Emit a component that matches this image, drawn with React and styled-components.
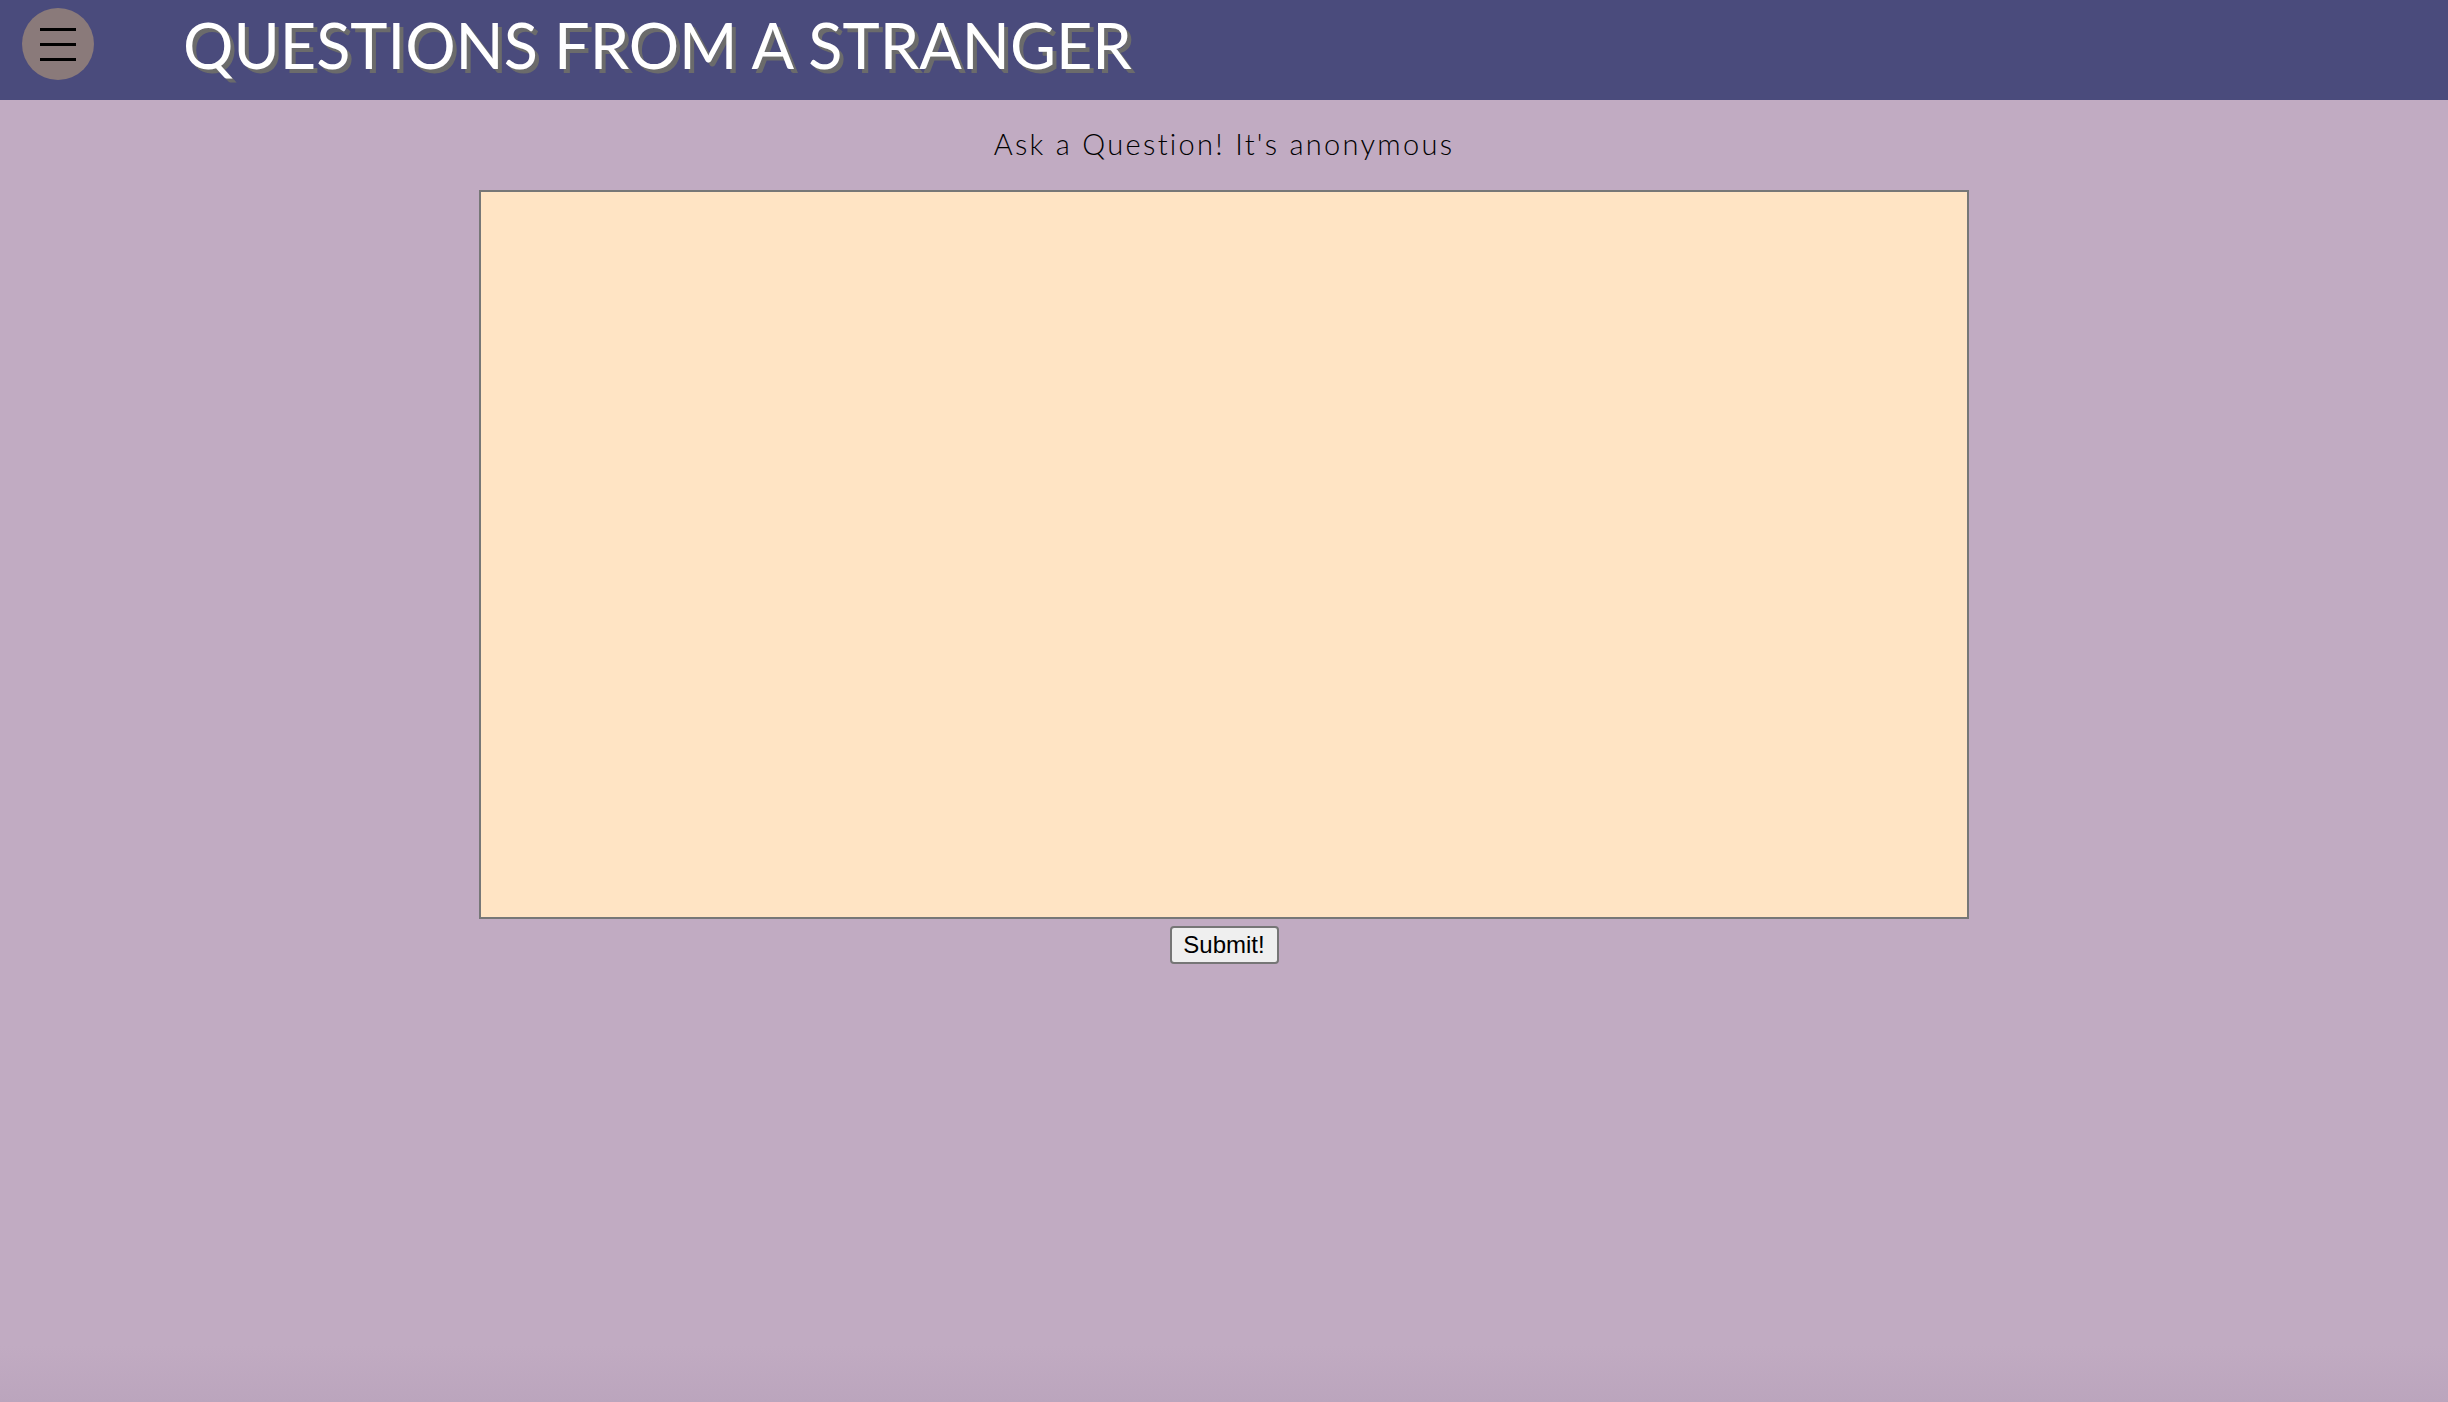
import styled, { createGlobalStyle } from "styled-components";

const GlobalStyle = createGlobalStyle`
  html, body {
    margin: 0;
    padding: 0;
  }
  body {
    min-height: 100vh;
    background: linear-gradient(to bottom, #c1abc2 0%, #c1abc2 96%, #bba5bd 100%);
  }
`;

const Page = styled.div`
  min-height: 100vh;
  display: flex;
  flex-direction: column;
`;

const Header = styled.header`
  height: 100px;
  background-color: #4a4b7c;
  display: flex;
  align-items: center;
  box-sizing: border-box;
  padding-left: 22px;
`;

const MenuButton = styled.button`
  width: 72px;
  height: 72px;
  border-radius: 50%;
  border: none;
  background-color: #8a7a7a;
  display: flex;
  flex-direction: column;
  align-items: center;
  justify-content: center;
  gap: 12px;
  padding: 0;
  margin-top: -12px;
  cursor: pointer;
`;

const MenuLine = styled.span`
  display: block;
  width: 36px;
  height: 3px;
  background-color: #000;
`;

const Title = styled.h1`
  margin: -12px 0 0 89px;
  font-family: "Lato", "Noto Sans", sans-serif;
  font-weight: 400;
  font-size: 63px;
  color: #fff;
  text-shadow: 4px 4px 0 #6b6b6b;
  letter-spacing: 0;
`;

const Main = styled.main`
  display: flex;
  flex-direction: column;
  align-items: center;
`;

const Prompt = styled.p`
  margin: 26px 0 0;
  font-family: "Lato", "Noto Sans", sans-serif;
  font-size: 29px;
  font-weight: 300;
  color: #000;
  letter-spacing: 2.3px;
  line-height: 36px;
`;

const Form = styled.form`
  display: flex;
  flex-direction: column;
  align-items: center;
  margin-top: 28px;
`;

const QuestionBox = styled.textarea`
  width: 1490px;
  height: 729px;
  box-sizing: border-box;
  background-color: #ffe4c4;
  border: 2px solid #777;
  resize: none;
  outline: none;
  font-family: "Liberation Sans", Arial, sans-serif;
  font-size: 24px;
`;

const SubmitButton = styled.button`
  margin-top: 7px;
  width: 109px;
  height: 38px;
  font-family: "Liberation Sans", Arial, sans-serif;
  font-size: 24px;
  color: #000;
  background-color: #efefef;
  border: 2px solid #767676;
  border-radius: 4px;
  padding: 0;
`;

export default function App() {
  return (
    <Page>
      <GlobalStyle />
      <Header>
        <MenuButton aria-label="menu">
          <MenuLine />
          <MenuLine />
          <MenuLine />
        </MenuButton>
        <Title>QUESTIONS FROM A STRANGER</Title>
      </Header>
      <Main>
        <Prompt>Ask a Question! It's anonymous</Prompt>
        <Form onSubmit={(e) => e.preventDefault()}>
          <QuestionBox />
          <SubmitButton type="submit">Submit!</SubmitButton>
        </Form>
      </Main>
    </Page>
  );
}
